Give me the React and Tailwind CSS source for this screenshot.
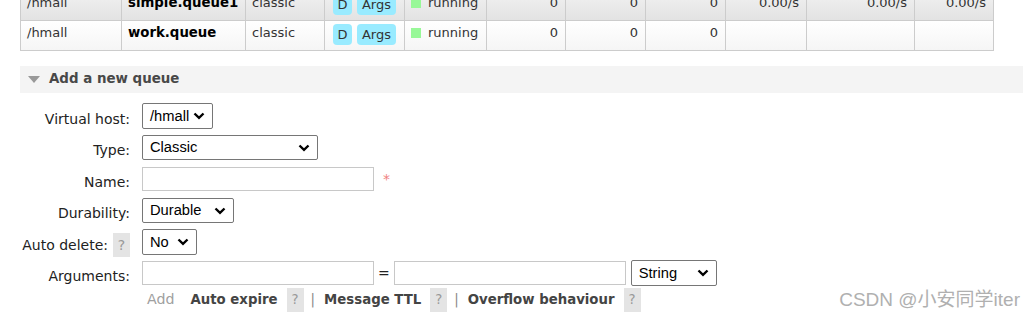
const rows = [
  { vhost: '/hmall', name: 'simple.queue1', rates: ['0.00/s', '0.00/s', '0.00/s'], head: true },
  { vhost: '/hmall', name: 'work.queue', rates: ['', '', ''] },
];

const cols = [101, 124, 79, 80, 82, 79, 80, 80, 81, 108, 79];

function Chevron() {
  return (
    <svg width="12" height="8" viewBox="0 0 12 8" className="shrink-0">
      <path d="M1.5 1.5 L6 5.8 L10.5 1.5" fill="none" stroke="#000" strokeWidth="2.4" />
    </svg>
  );
}

function Select({ value, w, h = 'h-[26px]' }) {
  return (
    <div
      className={`flex ${h} items-center justify-between rounded-[2px] border border-[#767676] bg-white pl-[7px] pr-[7px] font-['Liberation_Sans',sans-serif] text-[14.7px] text-black`}
      style={{ width: w }}
    >
      <span>{value}</span>
      <Chevron />
    </div>
  );
}

function TextBox({ w }) {
  return <div className="h-[24px] border border-[#c8c8c8] bg-white" style={{ width: w }} />;
}

function Help() {
  return (
    <span className="inline-flex h-[24px] w-[17px] items-center justify-center bg-[#e4e4e4] font-normal text-[#999]">?</span>
  );
}

function Label({ children }) {
  return <div className="flex w-[131px] shrink-0 items-center justify-end gap-[5px] pr-px pt-[6px]">{children}</div>;
}

export default function App() {
  return (
    <div className="h-[314px] overflow-hidden bg-white font-['DejaVu_Sans',Verdana,sans-serif] text-[13px] text-[#333]">
      <table className="ml-[20px] mt-[-10px] border-collapse table-fixed">
        <colgroup>
          {cols.map((w, i) => (
            <col key={i} style={{ width: w }} />
          ))}
        </colgroup>
        <tbody>
          {rows.map((r) => (
            <tr
              key={r.name}
              className={`h-[30px] ${r.head ? 'bg-gradient-to-b from-[#f2f2f2] to-[#e2e2e2]' : 'bg-gradient-to-b from-white to-[#f5f5f5]'}`}
            >
              <td className="border border-[#cccccc] px-[6px] pt-[1px] align-top leading-[22px]">{r.vhost}</td>
              <td className="border border-[#cccccc] px-[6px] pt-[1px] align-top text-[13.3px] font-bold leading-[22px] text-black">{r.name}</td>
              <td className="border border-[#cccccc] px-[6px] pt-[1px] align-top leading-[22px]">classic</td>
              <td className="border border-[#cccccc] px-[8px] pt-[3px] align-top">
                <div className="flex gap-[5px]">
                  <span className="inline-flex h-[21px] w-[19px] items-center justify-center rounded-[4px] bg-[#99ebff]">D</span>
                  <span className="inline-flex h-[21px] w-[39px] items-center justify-center rounded-[4px] bg-[#99ebff]">Args</span>
                </div>
              </td>
              <td className="border border-[#cccccc] px-[6px] pt-[1px] align-top leading-[22px]">
                <span className="inline-flex items-center gap-[7px]">
                  <span className="inline-block h-[10px] w-[10px] bg-[#98f898]" />
                  running
                </span>
              </td>
              <td className="border border-[#cccccc] px-[7px] pt-[1px] text-right align-top leading-[22px]">0</td>
              <td className="border border-[#cccccc] px-[7px] pt-[1px] text-right align-top leading-[22px]">0</td>
              <td className="border border-[#cccccc] px-[7px] pt-[1px] text-right align-top leading-[22px]">0</td>
              {r.rates.map((v, i) => (
                <td key={i} className="border border-[#cccccc] px-[7px] pt-[1px] text-right align-top leading-[22px]">{v}</td>
              ))}
            </tr>
          ))}
        </tbody>
      </table>

      <div className="ml-[20px] mt-[15px] flex h-[27px] items-center gap-[9px] bg-[#f4f4f4] pl-[8px] text-[13.4px] font-bold text-[#484848]">
        <svg width="12" height="7" viewBox="0 0 12 7">
          <path d="M0 0 H12 L6 7 Z" fill="#999" />
        </svg>
        <span>Add a new queue</span>
      </div>

      <div className="mt-[10px] flex flex-col text-[14px] text-[#222]">
        <div className="flex h-[26px] items-center gap-[11px]">
          <Label>Virtual host:</Label>
          <Select value="/hmall" w={71} />
        </div>
        <div className="mt-[6px] flex h-[25px] items-center gap-[11px]">
          <Label>Type:</Label>
          <Select value="Classic" w={176} h="h-[25px]" />
        </div>
        <div className="mt-[7px] flex h-[24px] items-center gap-[11px]">
          <Label>Name:</Label>
          <TextBox w={232} />
          <span className="ml-[-2px] text-[#f08080]">*</span>
        </div>
        <div className="mt-[7px] flex h-[25px] items-center gap-[11px]">
          <Label>Durability:</Label>
          <Select value="Durable" w={92} h="h-[25px]" />
        </div>
        <div className="mt-[6px] flex h-[26px] items-center gap-[11px]">
          <Label>
            Auto delete: <Help />
          </Label>
          <Select value="No" w={55} />
        </div>
        <div className="mt-[5px] flex h-[26px] items-center gap-[11px]">
          <Label>Arguments:</Label>
          <div className="flex items-center gap-[2px]">
            <TextBox w={232} />
            <span className="px-[2px]">=</span>
            <TextBox w={232} />
            <div className="ml-[3px]">
              <Select value="String" w={86} />
            </div>
          </div>
        </div>
        <div className="mt-[2px] flex h-[24px] items-center pl-[147px] text-[13.3px]">
          <span className="text-[14.2px] text-[#a0a0a0]">Add</span>
          <span className="ml-[16px] font-bold text-[#444]">Auto expire</span>
          <span className="ml-[9px]"><Help /></span>
          <span className="ml-[7px] text-[#888]">|</span>
          <span className="ml-[9px] font-bold text-[#444]">Message TTL</span>
          <span className="ml-[9px]"><Help /></span>
          <span className="ml-[7px] text-[#888]">|</span>
          <span className="ml-[9px] font-bold text-[#444]">Overflow behaviour</span>
          <span className="ml-[9px]"><Help /></span>
          <span className="ml-auto mr-[3px] font-['Liberation_Sans','Noto_Sans_CJK_SC',sans-serif] text-[19px] text-[#b0b0b0]">
            CSDN @小安同学iter
          </span>
        </div>
      </div>
    </div>
  );
}
